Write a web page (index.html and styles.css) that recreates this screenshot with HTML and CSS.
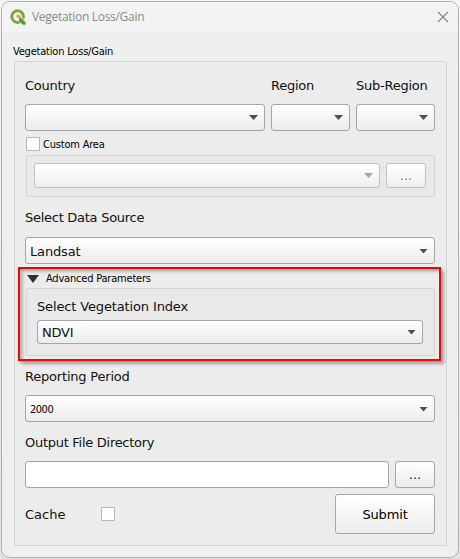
FILE: index.html
```html
<!DOCTYPE html>
<html lang="en">
<head>
<meta charset="utf-8">
<title>Vegetation Loss/Gain</title>
<link rel="stylesheet" href="styles.css">
</head>
<body>
<main class="window">
  <header class="titlebar">
    <svg class="logo" width="16" height="16" viewBox="0 0 16 16">
      <circle cx="7.6" cy="7.6" r="5.8" fill="none" stroke="#79a83b" stroke-width="3"/>
      <path d="M8 8h3.4l4.200 4.400v3.100h-3.200L8 11.300z" fill="#f2f2f2"/>
      <path d="M9 9h2.200l4.500 4.500v2.200h-3L9 11.700z" fill="#559b35"/>
      <path d="M6.500 5.800h2.700l1.500 1.700v2H8.900L6.500 8.100z" fill="#ef9a52"/>
    </svg>
    <span class="caption">Vegetation Loss/Gain</span>
    <svg class="close" width="12" height="12" viewBox="0 0 12 12"><path d="M1 1l10 10M11 1L1 11" fill="none" stroke="#858585" stroke-width="1.1"/></svg>
  </header>
  <div class="group-title small">Vegetation Loss/Gain</div>
  <section class="panel">
    <div class="areas area-labels">
      <label>Country</label><label>Region</label><label>Sub-Region</label>
    </div>
    <div class="areas">
      <div class="field combo"><i class="arrow"></i></div>
      <div class="field combo"><i class="arrow"></i></div>
      <div class="field combo"><i class="arrow"></i></div>
    </div>
    <div class="custom small"><span class="check"></span><span>Custom Area</span></div>
    <div class="subpanel custom-box">
      <div class="field combo disabled"><i class="arrow"></i></div>
      <div class="field button disabled">...</div>
    </div>
    <div class="label source-label">Select Data Source</div>
    <div class="field combo source"><span>Landsat</span><i class="arrow"></i></div>
    <section class="advanced">
      <div class="advanced-head small"><i class="disclosure"></i><span>Advanced Parameters</span></div>
      <div class="subpanel index-box">
        <div class="label index-label">Select Vegetation Index</div>
        <div class="field combo"><span>NDVI</span><i class="arrow"></i></div>
      </div>
      <div class="highlight"></div>
    </section>
    <div class="label period-label">Reporting Period</div>
    <div class="field combo small year"><span>2000</span><i class="arrow"></i></div>
    <div class="label output-label">Output File Directory</div>
    <div class="output-row">
      <div class="field input"></div>
      <div class="field button browse">...</div>
    </div>
    <div class="actions">
      <span class="cache">Cache</span><span class="check"></span>
      <div class="field button submit">Submit</div>
    </div>
  </section>
</main>
</body>
</html>
```
FILE: styles.css
```css
* { box-sizing: border-box; }
body {
  margin: 0;
  width: 460px;
  height: 559px;
  padding: 1px;
  overflow: hidden;
  background: linear-gradient(#f5f5f5, #e2e2e2);
  font: 13px "DejaVu Sans", Verdana, sans-serif;
  color: #111;
}
.window {
  height: 557px;
  border: 1px solid #b0b0b0;
  border-radius: 9px;
  background: #efefef;
  overflow: hidden;
}
.titlebar {
  display: flex;
  align-items: center;
  height: 30px;
  padding: 0 8px;
  background: #f3f3f3;
}
.logo { margin-top: -1px; }
.caption {
  flex: 1;
  margin-left: 6px;
  font: 12px/16px "Open Sans", "Noto Sans", sans-serif;
  letter-spacing: -.3px;
  color: #8b8b8b;
}
.close { margin-right: 1px; margin-top: -1px; }
.small {
  font-family: "DejaVu Sans Condensed", "DejaVu Sans", Tahoma, sans-serif;
  font-size: 11px;
  letter-spacing: -.2px;
  color: #000;
}
.group-title { height: 29px; padding: 13px 0 0 11px; line-height: 13px; }
.panel {
  height: 485px;
  margin-left: 12px;
  width: 433px;
  padding: 0 11px 0 10px;
  border: 1px solid #d3d3d3;
  border-radius: 2px;
  background: #ececec;
}
.areas { display: grid; grid-template-columns: 240px 79px 79px; column-gap: 6px; }
.area-labels { height: 42px; padding-top: 15px; line-height: 18px; white-space: nowrap; letter-spacing: -.24px; }
.field {
  display: flex;
  align-items: center;
  height: 27px;
  border: 1px solid #a6a6a6;
  border-radius: 3px;
  background: linear-gradient(#fff, #ececec);
}
.combo { justify-content: space-between; padding: 0 6px 0 4px; }
.arrow {
  width: 9px;
  height: 5px;
  margin-left: auto;
  background: #505050;
  clip-path: polygon(0 0, 100% 0, 50% 100%);
}
.source { padding-top: 1px; letter-spacing: -.15px; }
.year { letter-spacing: -.5px; padding-top: 1px; }
.input { background: #fff; }
.button { justify-content: center; }
.custom { display: flex; align-items: center; height: 24px; padding: 2px 0 0 1px; }
.check { width: 14px; height: 14px; border: 1px solid #b9b9b9; background: #fff; }
.custom .check { margin-right: 3px; }
.subpanel {
  margin-left: 1px;
  border: 1px solid #d3d3d3;
  border-radius: 2px;
  background: #e9e9e9;
}
.custom-box { display: flex; gap: 6px; height: 42px; padding: 7px 8px 0 7px; }
.custom-box .field { height: 25px; }
.custom-box .combo { flex: 1; }
.custom-box .button { width: 40px; }
.disabled { border-color: #c2c2c2; background: linear-gradient(#fff, #efefef); color: #777; }
.disabled .arrow { background: #a6a6a6; }
.label { line-height: 18px; white-space: nowrap; }
.source-label { height: 40px; padding-top: 12px; letter-spacing: -.27px; }
.advanced { position: relative; height: 92px; }
.advanced-head { display: flex; align-items: center; height: 24px; padding: 5px 0 0 2px; }
.disclosure {
  width: 12px;
  height: 8px;
  margin: 1px 7px 0 0;
  background: #303030;
  clip-path: polygon(0 0, 100% 0, 50% 100%);
}
.index-box { height: 68px; padding: 0 11px 0 10px; }
.index-label { height: 31px; padding-top: 9px; letter-spacing: -.14px; }
.index-box .field { height: 24px; letter-spacing: -.2px; }
.highlight {
  position: absolute;
  left: -7px;
  top: 3px;
  width: 423px;
  height: 94px;
  border: 2px solid #f00;
  box-shadow: 3px 3px 3px rgba(0, 0, 0, .3), inset 3px 3px 3px rgba(0, 0, 0, .22);
}
.period-label { height: 39px; padding-top: 12px; letter-spacing: -.2px; }
.output-label { height: 39px; padding-top: 12px; letter-spacing: -.28px; }
.output-row { display: grid; grid-template-columns: 364px 40px; gap: 6px; }
.browse { color: #24104e; }
.actions { display: flex; align-items: center; height: 40px; margin-top: 6px; }
.cache { width: 76px; }
.submit { width: 100px; height: 40px; margin-left: auto; color: #000; letter-spacing: -.15px; }
```
